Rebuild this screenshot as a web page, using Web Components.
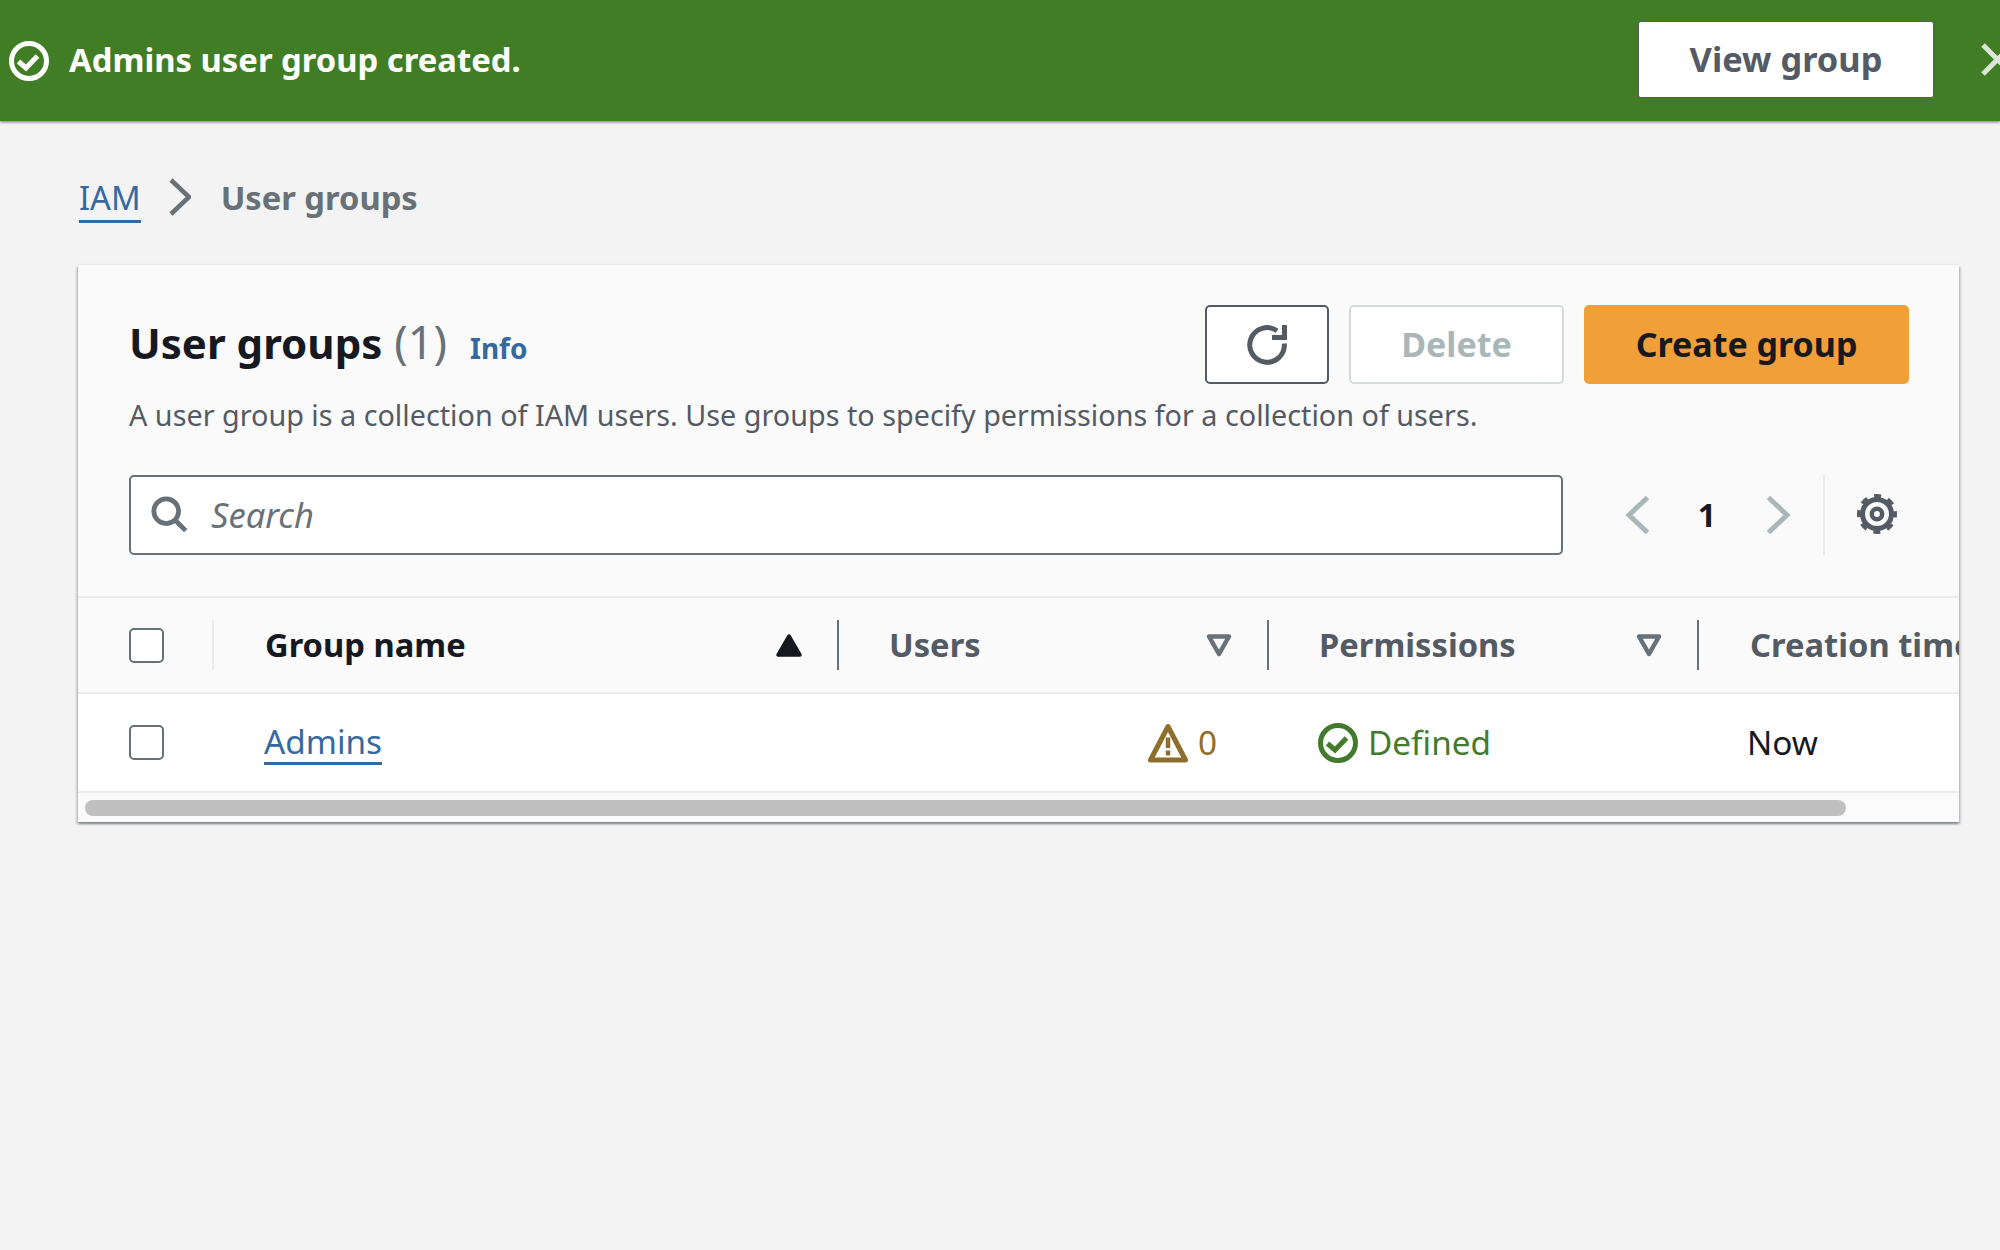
<!doctype html>
<html lang="en"><head><meta charset="utf-8"><title>User groups</title>
<style>
html,body{margin:0;height:100%;overflow:hidden;background:#f3f3f3}
body{font-family:"Noto Sans",sans-serif;color:#16191f}
</style></head>
<body>
<aws-flash action="View group">Admins user group created.</aws-flash>
<aws-page>
  <aws-breadcrumbs><a slot="link">IAM</a><span slot="current">User groups</span></aws-breadcrumbs>
  <aws-card heading="User groups" count="(1)" description="A user group is a collection of IAM users. Use groups to specify permissions for a collection of users.">
    <aws-button slot="actions" variant="normal" style="width:124px"><aws-icon name="refresh" size="40"></aws-icon></aws-button>
    <aws-button slot="actions" variant="disabled" style="width:215px">Delete</aws-button>
    <aws-button slot="actions" variant="primary" style="width:325px">Create group</aws-button>
    <aws-search slot="filter" placeholder="Search"></aws-search>
    <aws-pager slot="filter"></aws-pager>
    <aws-table slot="table">
      <aws-th kind="select"><aws-checkbox></aws-checkbox></aws-th>
      <aws-th sort="up" active pad="51">Group name</aws-th>
      <aws-th sort="down" pad="50">Users</aws-th>
      <aws-th sort="down" pad="50">Permissions</aws-th>
      <aws-th pad="51">Creation time</aws-th>
      <aws-td pad="51"><aws-checkbox></aws-checkbox></aws-td>
      <aws-td pad="50"><aws-link>Admins</aws-link></aws-td>
      <aws-td align="end" tone="warn"><aws-icon name="warning" size="40"></aws-icon><aws-label>0</aws-label></aws-td>
      <aws-td pad="49" tone="ok"><aws-icon name="ok" size="40"></aws-icon><aws-label>Defined</aws-label></aws-td>
      <aws-td pad="48"><aws-label>Now</aws-label></aws-td>
    </aws-table>
  </aws-card>
</aws-page>
<script>
const ICONS={
 ok:'<circle cx="20" cy="20" r="17.500" fill="none" stroke="currentColor" stroke-width="5"/><path d="M9.500 20.500l7.500 6.500 11.500-12" fill="none" stroke="currentColor" stroke-width="5"/>',
 warning:'<path d="M20 3.500L2.500 37h35z" fill="none" stroke="currentColor" stroke-width="5" stroke-linejoin="round"/><path d="M20 14.500v10.500M20 27.500v5" fill="none" stroke="currentColor" stroke-width="4.500"/>',
 refresh:'<path d="M37.300 18.500A17.300 17.300 0 1 1 30 5.800" fill="none" stroke="currentColor" stroke-width="5"/><path d="M37.500 0v12.500H25" fill="none" stroke="currentColor" stroke-width="5"/>',
 search:'<circle cx="16" cy="16" r="13" fill="none" stroke="currentColor" stroke-width="5"/><path d="M25 25l11.500 11.500" fill="none" stroke="currentColor" stroke-width="5"/>',
 gear:'<g fill="none" stroke="currentColor"><circle cx="20" cy="20" r="14.500" stroke-width="5"/><circle cx="20" cy="20" r="5.200" stroke-width="4.500"/><circle cx="20" cy="20" r="18" stroke-width="4" stroke-dasharray="7 7.137" stroke-dashoffset="3.500"/></g>',
 left:'<path d="M29.500 2.500L11 20l18.500 17.500" fill="none" stroke="currentColor" stroke-width="5"/>',
 right:'<path d="M10.500 2.500L29 20 10.500 37.500" fill="none" stroke="currentColor" stroke-width="5"/>',
 up:'<path d="M20 11L9 30h22z" fill="currentColor" stroke="currentColor" stroke-width="3.500" stroke-linejoin="round"/>',
 down:'<path d="M10 11.500h20L20 29z" fill="none" stroke="currentColor" stroke-width="4.500" stroke-linejoin="round"/>'
};
const def=(n,render)=>customElements.define(n,class extends HTMLElement{
  connectedCallback(){ if(!this.shadowRoot){this.attachShadow({mode:'open'}).innerHTML=render(this);} }
});
def('aws-icon',e=>{const s=e.getAttribute('size')||40;return `<style>:host{display:flex;flex:none;width:${s}px;height:${s}px}svg{display:block}</style><svg width="${s}" height="${s}" viewBox="0 0 40 40" aria-hidden="true">${ICONS[e.getAttribute('name')]||''}</svg>`});
def('aws-flash',e=>`<style>
 :host{display:flex;align-items:center;height:121px;background:#407d25;color:#fff;box-shadow:0 1px 3px rgba(0,0,0,.55);overflow:hidden;font-size:32.800px;font-weight:700;padding-left:9px;box-sizing:border-box}
 .msg{margin-left:20px;flex:1;white-space:nowrap;padding-bottom:2px}
 .btn{flex:none;width:296px;height:77px;box-sizing:border-box;background:#fff;color:#545b64;border:1px solid #545b64;border-radius:3px;font-size:34.400px;display:flex;align-items:center;justify-content:center;margin:0 46px 2px 0;padding-bottom:2px}
 .x{flex:none;display:block;margin-bottom:2px}
</style><aws-icon name="ok" size="40"></aws-icon><span class="msg"><slot></slot></span><span class="btn">${e.getAttribute('action')}</span>
<svg class="x" width="20" height="36" viewBox="0 0 20 36"><path d="M3 3l32 32M3 32l32-32" fill="none" stroke="#dde5d9" stroke-width="5"/></svg>`);
def('aws-page',()=>`<style>:host{display:block;padding:0 41px 0 78px}</style><slot></slot>`);
def('aws-breadcrumbs',()=>`<style>
 :host{display:flex;align-items:center;height:144px;padding-top:8px;box-sizing:border-box;font-size:32.700px}
 ::slotted([slot=link]){color:#35699f;border-bottom:3px solid #35699f;line-height:45px;margin:4px 0 0 1px}
 ::slotted([slot=current]){color:#687078;font-weight:700}
 svg{margin:0 30px 0 28px;display:block;color:#687078}
</style><slot name="link"></slot><svg width="22" height="38" viewBox="0 0 22 38"><path d="M2 2l18 17L2 36" fill="none" stroke="currentColor" stroke-width="4.500"/></svg><slot name="current"></slot>`);
def('aws-button',e=>{const v=e.getAttribute('variant');const st={normal:'background:#fff;color:#545b64;border:2px solid #545b64',disabled:'background:#fff;color:#aab7b8;border:2px solid #d5dbdb;padding-bottom:2px',primary:'background:#f19f38;color:#16191f;border:2px solid #f19f38;padding-bottom:2px'}[v];
 return `<style>:host{display:flex;box-sizing:border-box;height:79px;align-items:center;justify-content:center;${st};border-radius:5px;font-size:34px;font-weight:700;white-space:nowrap}</style><slot></slot>`});
def('aws-card',e=>`<style>
 :host{display:block;width:1881px;height:557px;box-sizing:border-box;background:#fafafa;box-shadow:0 2px 2px rgba(0,28,36,.3),2px 2px 2px rgba(0,28,36,.15),-2px 2px 2px rgba(0,28,36,.15),0 -1px 2px rgba(0,0,0,.06);overflow:hidden}
 .head{padding:40px 50px 41px 51px}
 .top{display:flex;align-items:center;height:79px}
 h2{margin:0;flex:1;font-size:42px;font-weight:700;line-height:56px;white-space:nowrap;display:flex;align-items:baseline}
 .n{font-weight:400;font-size:45px;color:#687078;margin-left:12px}
 .info{font-size:28px;color:#35699f;margin-left:23px}
 .actions{display:flex;gap:20px}
 .desc{margin:11px 0 40px;font-size:28.780px;line-height:40px;color:#545b64;white-space:nowrap}
 .filter{display:flex;height:80px}
</style><div class="head"><div class="top"><h2>${e.getAttribute('heading')}<span class="n">${e.getAttribute('count')}</span><span class="info">Info</span></h2><div class="actions"><slot name="actions"></slot></div></div>
<p class="desc">${e.getAttribute('description')}</p><div class="filter"><slot name="filter"></slot></div></div><slot name="table"></slot>`);
def('aws-search',e=>`<style>
 :host{display:flex;align-items:center;width:1434px;height:80px;box-sizing:border-box;background:#fff;border:2px solid #687078;border-radius:5px;padding-left:20px;color:#687078;flex:none}
 span{margin-left:22px;font-style:italic;font-size:34.500px;padding-bottom:1px}
</style><aws-icon name="search" size="38"></aws-icon><span>${e.getAttribute('placeholder')}</span>`);
def('aws-pager',()=>`<style>
 :host{display:flex;align-items:center;height:80px;flex:none;margin-left:40px}
 .b{width:70px;display:flex;justify-content:center;color:#aab7b8}
 .n{width:68px;text-align:center;font-size:32px;font-weight:700;color:#16191f;padding-bottom:2px}
 .b.r{width:74px}
 .sep{width:2px;height:80px;background:#e9ebed;margin-left:8px}
 .g{margin:0 0 2px 32px;color:#545b64;display:flex}
</style><span class="b"><aws-icon name="left" size="40"></aws-icon></span><span class="n">1</span><span class="b r"><aws-icon name="right" size="40"></aws-icon></span><span class="sep"></span><span class="g"><aws-icon name="gear" size="40"></aws-icon></span>`);
def('aws-table',()=>`<style>
 :host{display:grid;grid-template-columns:136px 625px 430px 430px 400px;grid-template-rows:98px 99px 29px;width:1621px}
 .bar{grid-column:1/-1;grid-row:3;background:#fbfbfb;padding:7px 0 0 7px;box-sizing:border-box;width:1881px}
 .thumb{width:1761px;height:16px;background:#c0c0c0;border-radius:8px}
</style><slot></slot><div class="bar"><div class="thumb"></div></div>`);
def('aws-th',e=>{const sel=e.getAttribute('kind')==='select',s=e.getAttribute('sort'),act=e.hasAttribute('active'),p=e.getAttribute('pad');
 const left=sel?51:p;
 return `<style>
 :host{display:flex;align-items:center;box-sizing:border-box;height:98px;background:#fafafa;border-top:2px solid #e9ebed;border-bottom:2px solid #e9ebed;padding-left:${left}px;font-size:32.700px;font-weight:700;color:${act||sel?'#16191f':'#545b64'};white-space:nowrap}
 .l{flex:1;padding-bottom:${sel?0:2}px}
 .ic{display:flex;color:${act?'#16191f':'#687078'};margin:0 28px 0 auto}
 .sep{flex:none;width:2px;height:50px;background:${sel?'#e9ebed':'#687078'}}
 </style><span class="l"><slot></slot></span>${s?`<span class="ic"><aws-icon name="${s}" size="40"></aws-icon></span>`:''}${(sel||s)?'<span class="sep"></span>':''}`});
def('aws-td',e=>{const end=e.getAttribute('align')==='end',p=e.getAttribute('pad')||0,t=e.getAttribute('tone');
 const c={warn:'#8d6e2b',ok:'#447a2d'}[t]||'#16191f';
 return `<style>:host{display:flex;align-items:center;gap:10px;box-sizing:border-box;height:99px;background:#fff;border-bottom:2px solid #e9ebed;font-size:33.300px;color:${c};white-space:nowrap;padding-left:${p}px;${end?'justify-content:flex-end;padding-right:52px':''}}</style><slot></slot>`});
def('aws-label',()=>`<style>:host{display:block;padding-bottom:2px}</style><slot></slot>`);
def('aws-link',()=>`<style>:host{display:inline-block;color:#35699f;border-bottom:3px solid #35699f;line-height:42px}</style><slot></slot>`);
def('aws-checkbox',()=>`<style>:host{display:block;flex:none;width:35px;height:35px;box-sizing:border-box;background:#fff;border:2.500px solid #687078;border-radius:5px}</style>`);
</script>
</body></html>
